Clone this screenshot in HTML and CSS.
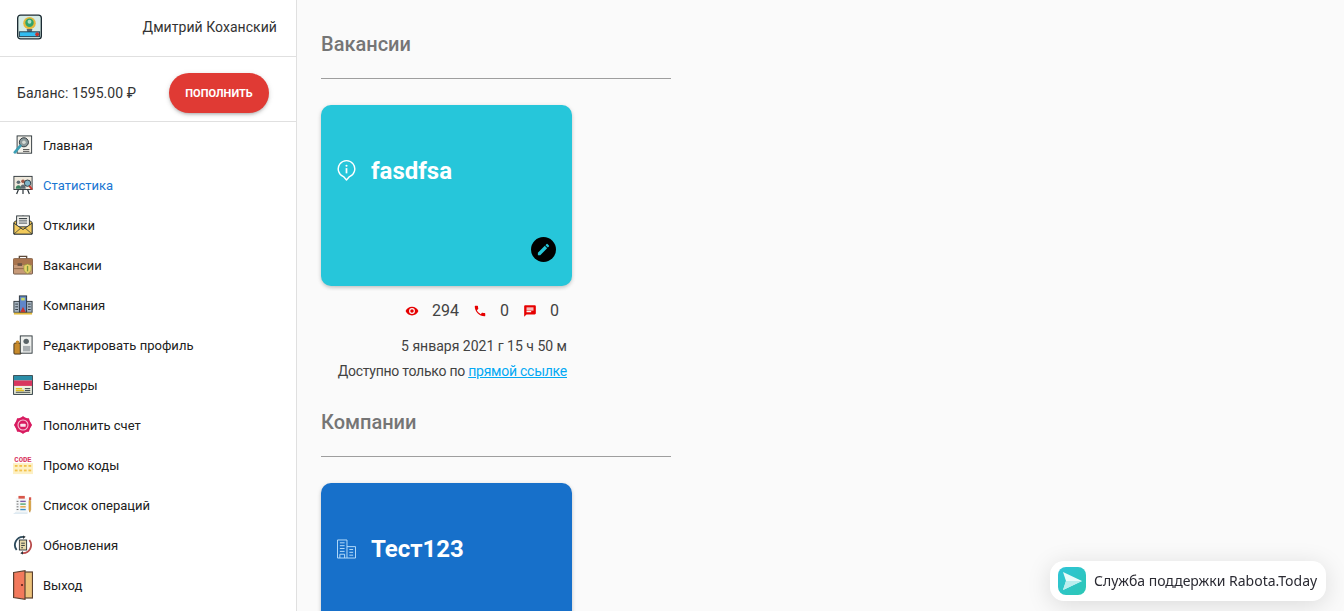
FILE: index.html
```html
<!DOCTYPE html>
<html lang="ru">
<head>
<meta charset="utf-8">
<title>Rabota.Today</title>
<link rel="stylesheet" href="styles.css">
</head>
<body>
<div class="app">
  <aside class="sidebar">
    <div class="user">
      <svg class="avatar" viewBox="0 0 26 26"><rect x=".7" y=".7" width="24.6" height="24.6" rx="3" fill="#d6ebe6" stroke="#1c2b33" stroke-width="1.4"/><circle cx="13" cy="9" r="6.5" fill="#e4b93c"/><circle cx="13" cy="8.500" r="4.400" fill="#2fa36b"/><circle cx="13" cy="7.500" r="2" fill="#a9e0c4"/><path d="M10 15h6l-1 4h-4z" fill="#5b6670"/><rect x="2.500" y="18" width="21" height="5" fill="#33bdf0" stroke="#28404f"/><circle cx="21" cy="20.500" r="2" fill="#c8352e"/></svg>
      <span class="user-name">Дмитрий Коханский</span>
    </div>
    <div class="balance">
      <span class="balance-text">Баланс: 1595.00 ₽</span>
      <button class="topup">ПОПОЛНИТЬ</button>
    </div>
    <nav class="menu">
      <a class="item"><svg class="ico" viewBox="0 0 22 22"><rect x="4.500" y="1" width="16" height="19" fill="#f3f1ea" stroke="#2a3338"/><circle cx="12" cy="8" r="5" fill="#8d9a9b" stroke="#2a3338"/><circle cx="12" cy="8" r="2" fill="#d8dcd6"/><path d="M8 12l-6 7" stroke="#3b9fb5" stroke-width="3" stroke-linecap="round"/><path d="M11 16h7M11 18h7" stroke="#444"/></svg><span>Главная</span></a>
      <a class="item active"><svg class="ico" viewBox="0 0 22 22"><rect x="1" y="1.500" width="20" height="14.500" fill="#efe9dc" stroke="#2a3338"/><circle cx="6" cy="8" r="2" fill="#5c6b73"/><path d="M3 15c0-5 6-5 6 0z" fill="#39805f"/><circle cx="11" cy="7" r="2" fill="#a1594a"/><path d="M8 15c0-6 6-6 6 0z" fill="#5c6b73"/><circle cx="16" cy="9" r="3.500" fill="#7fb5c9" stroke="#2a3338"/><path d="M18 12l3 4" stroke="#c8352e" stroke-width="2"/><path d="M6 16l-2 5M11 16v5M16 16l2 5" stroke="#2a3338" stroke-width="1.300"/></svg><span>Статистика</span></a>
      <a class="item"><svg class="ico" viewBox="0 0 22 22"><path d="M1 8l10-7 10 7v13H1z" fill="#eec24f" stroke="#2a3338"/><rect x="4" y="1" width="14" height="12" fill="#f2f2ee" stroke="#2a3338"/><path d="M6.500 4h9" stroke="#2a3338" stroke-width="1.200"/><path d="M6.500 6.500h9M6.500 9h9" stroke="#6b7378" stroke-width="1.400"/><path d="M1 9l10 7 10-7v12H1z" fill="#f2ca5c" stroke="#2a3338"/><path d="M1 21l8-7M21 21l-8-7" stroke="#2a3338" stroke-width=".8"/></svg><span>Отклики</span></a>
      <a class="item"><svg class="ico" viewBox="0 0 22 22"><path d="M7 4V1.500h8V4" fill="none" stroke="#5d4a3a" stroke-width="1.500"/><rect x=".5" y="4" width="21" height="17" rx="1" fill="#c79a78" stroke="#6b5443"/><rect x=".5" y="4" width="21" height="7" fill="#a9754e"/><rect x="5" y="9" width="5" height="3" fill="#6b5443"/><path d="M1 15h11" stroke="#8b6444"/><path d="M16 10l4 1.500v4c0 2.500-2 4-4 5-2-1-4-2.500-4-5v-4z" fill="#e9d16a" stroke="#8b9a3a" stroke-width=".7"/><path d="M16 12v6" stroke="#7a9a3a" stroke-width="1.500"/></svg><span>Вакансии</span></a>
      <a class="item"><svg class="ico" viewBox="0 0 22 22"><rect x="1" y="7" width="20" height="12" fill="#a9b7c4" stroke="#2a3338"/><rect x="7" y="1" width="8" height="18" fill="#5f86c9" stroke="#2a3338"/><rect x="9" y="3" width="4" height="3" fill="#c9d96a"/><path d="M2.500 10h3M2.500 13h3M2.500 16h3M16.500 10h3M16.500 13h3M16.500 16h3" stroke="#2a3338"/><path d="M8 19l3-6 3 6z" fill="#c8352e"/><path d="M1 20.500h20" stroke="#e2b93c" stroke-width="2"/></svg><span>Компания</span></a>
      <a class="item"><svg class="ico" viewBox="0 0 22 22"><rect x="1" y="9" width="8" height="12" rx="1" fill="#c78a2c" stroke="#3a2c1a"/><circle cx="5" cy="8" r="2" fill="#c78a2c"/><rect x="8" y="1" width="13" height="19" fill="#eef0ee" stroke="#2a3338"/><circle cx="14.500" cy="7" r="3" fill="#5a6468"/><rect x="11" y="12" width="8" height="6" fill="#a7adb0"/></svg><span>Редактировать профиль</span></a>
      <a class="item"><svg class="ico" viewBox="0 0 22 22"><rect x=".7" y=".7" width="20.600" height="20.600" fill="#eef0df" stroke="#1c2b33"/><rect x="1" y="1" width="20" height="5" fill="#2b8ea8"/><rect x="1" y="6" width="20" height="6" fill="#d8365f"/><path d="M3 15h7M3 17h9" stroke="#e0c020" stroke-width="1.500"/><path d="M13 15h6M13 17h6M3 19h16" stroke="#2a3338"/></svg><span>Баннеры</span></a>
      <a class="item"><svg class="ico" viewBox="0 0 22 22"><circle cx="11" cy="11" r="8.500" fill="#d81b60"/><path d="M11 1l3 2.500h3.500L18.500 7 21 11l-2.500 4-1 3.500H14L11 21l-3-2.500H4.500L3.500 15 1 11l2.500-4 1-3.500H8z" fill="#d81b60"/><circle cx="11" cy="11" r="5.500" fill="none" stroke="#f6c3d5" stroke-width="1.200"/><rect x="8" y="9.500" width="6" height="3.500" rx="1" fill="#fbe3ec"/></svg><span>Пополнить счет</span></a>
      <a class="item"><svg class="ico" viewBox="0 0 22 22"><rect y="9" width="22" height="12" fill="#fdf0c4"/><g fill="#f3c24a"><rect x="2" y="11" width="3" height="2"/><rect x="7" y="11" width="3" height="2"/><rect x="12" y="11" width="3" height="2"/><rect x="17" y="11" width="3" height="2"/><rect x="2" y="16" width="3" height="2"/><rect x="7" y="16" width="3" height="2"/><rect x="12" y="16" width="3" height="2"/><rect x="17" y="16" width="3" height="2"/></g><text class="code-text" x="11" y="7.500" text-anchor="middle">CODE</text></svg><span>Промо коды</span></a>
      <a class="item"><svg class="ico" viewBox="0 0 22 22"><path d="M0 21l4-3h12v3z" fill="#dfeaf2"/><rect x="3" y="3" width="13" height="16" fill="#f4f6f7"/><rect x="6" y="1" width="7" height="3" fill="#d8574a"/><path d="M8 7h6" stroke="#7a5aa8" stroke-width="1.500"/><path d="M8 10h6" stroke="#4ba36f" stroke-width="1.500"/><path d="M8 13h6" stroke="#e2a13c" stroke-width="1.500"/><path d="M8 16h6" stroke="#3b8fc4" stroke-width="1.500"/><path d="M4 7h2M4 10h2M4 13h2M4 16h2" stroke="#666"/><path d="M19.500 6v10l-1 3-1-3V6z" fill="#eeb03a" stroke="#a56d1a" stroke-width=".5"/><rect x="17.500" y="2.500" width="2.500" height="3" fill="#d8574a"/></svg><span>Список операций</span></a>
      <a class="item"><svg class="ico" viewBox="0 0 22 22"><path d="M11 2a9 9 0 0 0-7 14.500" fill="none" stroke="#2d4a5c" stroke-width="2"/><path d="M11 20a9 9 0 0 0 7-14.500" fill="none" stroke="#b84a4a" stroke-width="2"/><path d="M14 2l-3-1.500v4zM8 20l3 1.500v-4z" fill="#2a3338"/><rect x="7" y="5.500" width="8" height="11" fill="#e8d9a8" stroke="#2a3338"/><path d="M9 9h4M9 11.500h4M9 14h2" stroke="#2a3338"/></svg><span>Обновления</span></a>
      <a class="item"><svg class="ico ico-exit" viewBox="0 0 20 30"><rect x="10" y="2" width="9.500" height="26" fill="#edc27a" stroke="#5a4030" stroke-width="1.200"/><path d="M.6 2.500L12 .7v28.600L.6 27.500z" fill="#f2795c" stroke="#5a4030" stroke-width="1.200"/><circle cx="9" cy="15" r="1.100" fill="#5a1f1a"/></svg><span>Выход</span></a>
    </nav>
  </aside>
  <main class="content">
    <h2 class="heading">Вакансии</h2>
    <div class="rule"></div>
    <article class="card card-teal">
      <div class="card-title">
        <svg class="card-ico" viewBox="0 0 20 24"><path d="M10 22l-3.200-3.600A8.700 8.700 0 1 1 13.200 18.400z" fill="none" stroke="#fff" stroke-width="1.500" stroke-linejoin="round"/><circle cx="10" cy="7" r="1.100" fill="#fff"/><rect x="9.100" y="9.500" width="1.800" height="5.500" fill="#fff"/></svg>
        <span>fasdfsa</span>
      </div>
      <button class="edit"><svg viewBox="0 0 24 24"><path fill="#26c6da" d="M3 17.250V21h3.750L17.810 9.940l-3.750-3.750L3 17.250zM20.710 7.040a1 1 0 0 0 0-1.410l-2.340-2.340a1 1 0 0 0-1.410 0l-1.830 1.830 3.750 3.750 1.830-1.830z"/></svg></button>
    </article>
    <div class="meta">
      <div class="stats">
        <svg class="stat-ico" viewBox="0 0 24 24"><path fill="#e60000" d="M12 4.500C7 4.500 2.730 7.610 1 12c1.730 4.390 6 7.500 11 7.500s9.270-3.110 11-7.500c-1.730-4.390-6-7.500-11-7.500zM12 17a5 5 0 1 1 0-10 5 5 0 0 1 0 10zm0-8a3 3 0 1 0 0 6 3 3 0 0 0 0-6z"/></svg>
        <span class="stat-num">294</span>
        <svg class="stat-ico" viewBox="0 0 24 24"><path fill="#e60000" d="M6.620 10.790c1.440 2.830 3.760 5.140 6.590 6.590l2.200-2.200c.27-.27.67-.36 1.020-.24 1.120.37 2.330.57 3.570.57.550 0 1 .45 1 1V20c0 .55-.45 1-1 1C10.610 21 3 13.390 3 4c0-.55.45-1 1-1h3.500c.55 0 1 .45 1 1 0 1.250.2 2.450.57 3.570.11.350.03.740-.25 1.020l-2.200 2.200z"/></svg>
        <span class="stat-num">0</span>
        <svg class="stat-ico" viewBox="0 0 24 24"><path fill="#e60000" d="M20 2H4c-1.100 0-2 .9-2 2v18l4-4h14c1.100 0 2-.9 2-2V4c0-1.100-.9-2-2-2zM6 9h12v2H6V9zm8 5H6v-2h8v2zm4-6H6V6h12v2z"/></svg>
        <span class="stat-num">0</span>
      </div>
      <div class="date">5 января 2021 г 15 ч 50 м</div>
      <div class="access">Доступно только по <a class="link" href="#">прямой ссылке</a></div>
    </div>
    <h2 class="heading heading-second">Компании</h2>
    <div class="rule"></div>
    <article class="card card-blue">
      <div class="card-title">
        <svg class="card-ico card-ico-building" viewBox="0 0 20 20"><path d="M.5 19.500V.5h10v19zM10.500 7.500h9v12h-9M3 19.500v-4h5v4" fill="none" stroke="#bbdefb"/><path d="M3 3.500h5M3 6.500h5M3 9.500h5M3 12.500h5M13 10.500h4M13 13.500h4M13 16.500h4" fill="none" stroke="#bbdefb"/></svg>
        <span>Тест123</span>
      </div>
    </article>
  </main>
  <div class="support">
    <svg class="support-logo" viewBox="0 0 28 28"><defs><linearGradient id="lg" x1="0" y1="0" x2="1" y2="1"><stop offset="0" stop-color="#2fc4d8"/><stop offset="1" stop-color="#2cc7b4"/></linearGradient></defs><rect width="28" height="28" rx="8" fill="url(#lg)"/><path d="M5 5l19 9-19 9 3-9z" fill="#e8fbfa"/><path d="M8 14h16L5 23z" fill="#b9eeee"/></svg>
    <span class="support-text">Служба поддержки Rabota.Today</span>
  </div>
</div>
</body>
</html>
```
FILE: styles.css
```css
* { box-sizing: border-box; }
html, body { margin: 0; height: 100%; overflow: hidden; }
body { background: #fafafa; font-family: Roboto, "Liberation Sans", sans-serif; color: rgba(0,0,0,.87); }
.app { display: flex; height: 100vh; overflow: hidden; }

.sidebar { width: 297px; flex: none; background: #fff; border-right: 1px solid #e0e0e0; }
.user { height: 57px; display: flex; align-items: center; justify-content: space-between; padding: 0 19px 3px 17px; border-bottom: 1px solid #e0e0e0; }
.avatar { width: 25px; height: 26px; display: block; }
.user-name { font-size: 14px; color: #333; letter-spacing: .05px; }
.balance { height: 65px; display: flex; align-items: center; justify-content: space-between; padding: 8px 27px 0 17px; border-bottom: 1px solid #e0e0e0; }
.balance-text { font-size: 14px; color: #333; letter-spacing: .06px; }
.topup { width: 100px; height: 40px; border: 0; border-radius: 20px; background: #e03a34; color: #fff; font: 700 11px Roboto, sans-serif; padding: 0; box-shadow: 0 2px 3px -1px rgba(0,0,0,.2), 0 2px 4px rgba(0,0,0,.1), 0 1px 6px rgba(0,0,0,.08); }
.menu { padding-top: 3px; }
.item { height: 40px; display: flex; align-items: center; padding-left: 13px; font-size: 13px; color: #212121; }
.item span { margin-left: 10px; letter-spacing: .02px; }
.item.active { color: #1976d2; }
.ico { width: 20px; height: 20px; flex: none; display: block; }
.ico-exit { height: 30px; }
.code-text { font: 700 8px "Liberation Mono", monospace; fill: #d8365f; }

.content { flex: 1; padding: 0 24px; min-width: 0; }
.heading { margin: 0; padding-top: 32px; font-size: 20px; line-height: 24px; font-weight: 500; color: #757575; }
.heading-second { padding-top: 29px; }
.rule { width: 350px; margin-top: 22px; border-top: 1px solid #9e9e9e; }
.card { width: 251px; height: 181px; margin-top: 26px; border-radius: 10px; position: relative; display: flex; flex-direction: column; justify-content: center; padding: 0 0 50px 16px; box-shadow: 0 2px 4px -1px rgba(0,0,0,.2), 0 1px 5px rgba(0,0,0,.1); }
.card-teal { background: #26c6da; }
.card-blue { background: #1770ca; }
.card-title { display: flex; align-items: center; color: #fff; font-size: 24px; font-weight: 700; line-height: 32px; }
.card-title span { margin-left: 15px; }
.card-ico { width: 19px; height: 23px; flex: none; display: block; }
.card-ico-building { height: 20px; }
.edit { position: absolute; right: 16px; bottom: 24px; width: 25px; height: 25px; padding: 5px; border: 0; border-radius: 50%; background: #000; }
.edit svg { width: 15px; height: 15px; display: block; }

.meta { width: 251px; font-size: 14px; color: #424242; text-align: right; }
.stats { height: 47px; padding: 2px 13px 0 0; display: flex; align-items: center; justify-content: flex-end; font-size: 16px; }
.stat-ico { width: 14px; height: 14px; flex: none; }
.stat-num { margin: 0 13.500px; color: #424242; }
.stat-num:last-child { margin-right: 0; }
.date { padding-right: 5px; line-height: 20px; margin-top: 3px; }
.access { padding-right: 5px; line-height: 20px; margin-top: 5px; letter-spacing: -.25px; }
.link { color: #03a9f4; }

.support { position: fixed; left: 1050px; top: 561px; width: 276px; height: 40px; display: flex; align-items: center; padding-left: 8px; background: #fff; border-radius: 14px; box-shadow: 0 4px 24px rgba(0,0,0,.13); font: 14px "Noto Sans", Roboto, sans-serif; color: #2b2b33; }
.support-logo { width: 28px; height: 28px; flex: none; margin-right: 8px; }
.support-text { margin-top: -2px; }
```
